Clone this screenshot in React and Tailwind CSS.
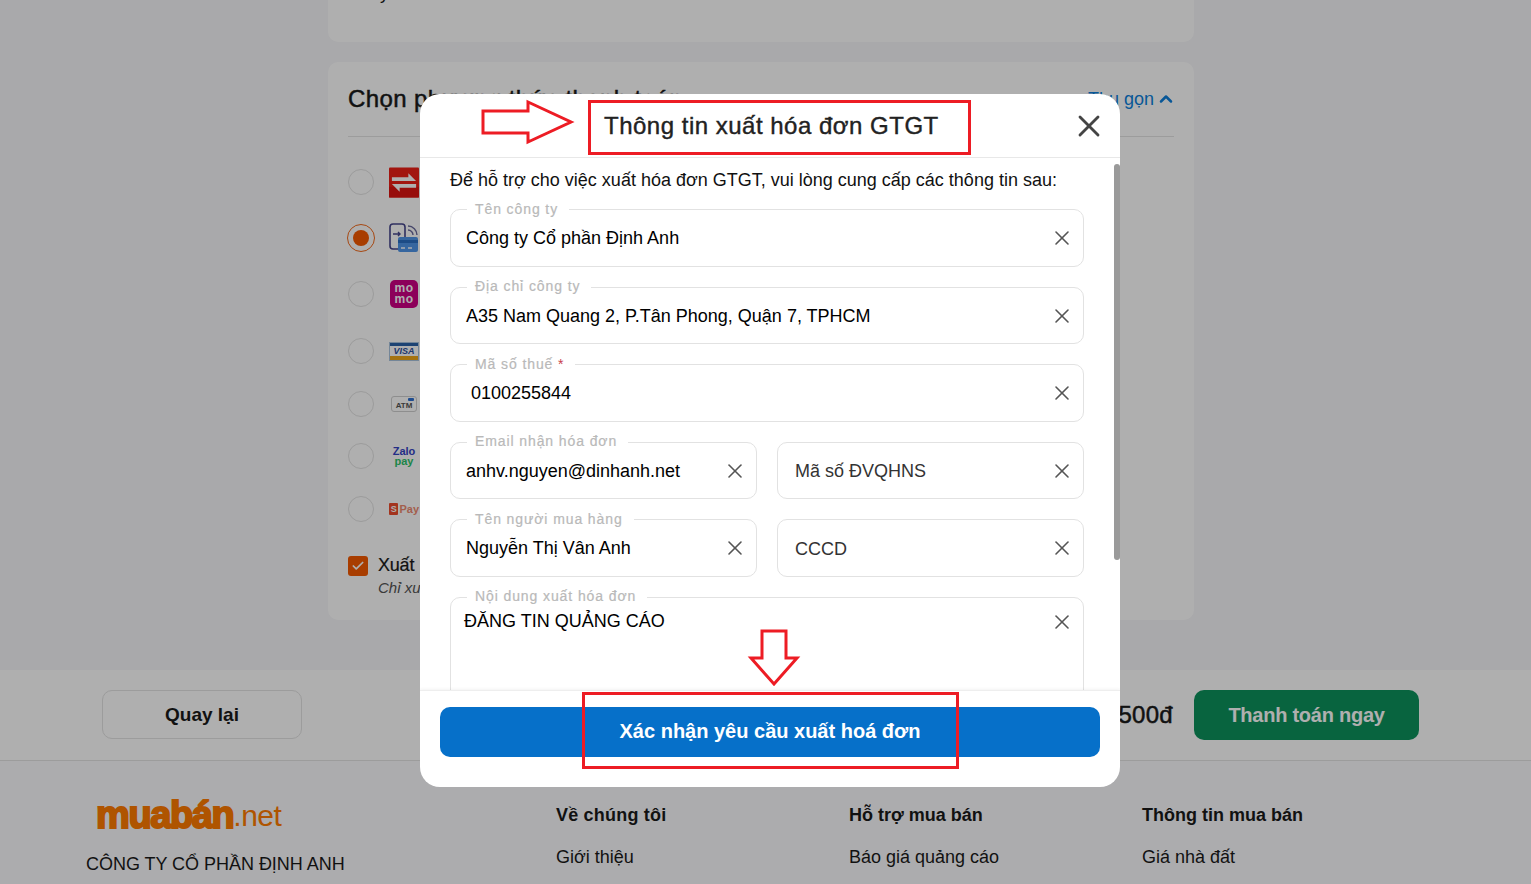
import { X, ChevronUp, Check } from 'lucide-react';

const rowHeights = ['h-[56px]', 'h-[56px]', 'h-[56px]', 'h-[58px]', 'h-[48px]', 'h-[56px]', 'h-[50px]'];

const BankIcon = () => (
  <svg width="31" height="31" viewBox="0 0 31 31">
    <rect width="31" height="31" rx="1" fill="#ec1f17" />
    <rect y="20" width="31" height="11" fill="#dc1410" />
    <path d="M3 14h25l-8-8v4H3z" fill="#fff" />
    <path d="M28 17H3l8 8v-4h17z" fill="#fff" />
  </svg>
);

const CardIcon = () => (
  <svg width="30" height="30" viewBox="0 0 30 30">
    <rect x="1" y="1" width="15" height="25" rx="3" fill="none" stroke="#46468c" strokeWidth="1.6" />
    <path d="M4 11h7m-2-2 2 2-2 2" fill="none" stroke="#46468c" strokeWidth="1.4" />
    <path d="M19 3a9 9 0 0 1 9 9M19 7a5 5 0 0 1 5 5" fill="none" stroke="#6a6a9c" strokeWidth="1.4" />
    <rect x="9" y="14" width="20" height="15" rx="2" fill="#4f95e8" />
    <rect x="9" y="17" width="20" height="3" fill="#2b6fc4" />
    <rect x="12" y="24" width="4" height="2" fill="#cfe2fb" />
    <rect x="19" y="24" width="4" height="2" fill="#cfe2fb" />
  </svg>
);

const MomoIcon = () => (
  <div className="flex h-[28px] w-[28px] flex-col items-center justify-center rounded-[5px] bg-[#cc0083] text-[12px] font-bold leading-[11px] tracking-[0.5px] text-white">
    <span>mo</span>
    <span>mo</span>
  </div>
);

const VisaIcon = () => (
  <div className="flex h-[19px] w-[30px] flex-col border border-[#a9c4de] bg-white">
    <div className="h-[3px] bg-[#2b62a8]" />
    <div className="flex-1 text-center text-[9px] font-bold italic leading-[10px] text-[#2b4f9e]">VISA</div>
    <div className="h-[4px] bg-[#f0a818]" />
  </div>
);

const AtmIcon = () => (
  <div className="relative flex h-[16px] w-[26px] items-center justify-center rounded-[3px] border border-[#cfcfcf] pt-[3px] text-[8px] font-bold text-[#555]">
    ATM
    <div className="absolute right-[2px] top-[1px] h-[3px] w-[6px] rounded-[1px] bg-[#2e6fd0]" />
  </div>
);

const ZaloIcon = () => (
  <div className="flex w-[30px] flex-col items-center text-[11px] font-bold leading-[10px]">
    <span className="text-[#3344c4]">Zalo</span>
    <span className="text-[#2cc26a]">pay</span>
  </div>
);

const ShopeeIcon = () => (
  <div className="flex w-[30px] items-center gap-px">
    <div className="h-[12px] w-[11px] rounded-[1px] bg-[#ee4d2d] text-center text-[9px] font-bold leading-[12px] text-white">S</div>
    <span className="text-[11px] font-bold text-[#ee8a70]">Pay</span>
  </div>
);

const methods = [
  { icon: BankIcon },
  { icon: CardIcon, selected: true },
  { icon: MomoIcon },
  { icon: VisaIcon },
  { icon: AtmIcon },
  { icon: ZaloIcon },
  { icon: ShopeeIcon },
];

const Field = ({ label, required, value, placeholder, pad = 'pl-[15px]', cls = 'h-[58px]', labelTop = 'top-[-10px]', textCls = '', area }) => (
  <div className={`relative flex rounded-[10px] border border-[#e2e2e2] ${cls} ${area ? 'items-start' : 'items-center'}`}>
    {label && (
      <span className={`absolute left-[16px] ${labelTop} bg-white px-[8px] pr-[11px] text-[14px] leading-[18px] tracking-[0.9px] text-[#b9b9b9] whitespace-nowrap [-webkit-text-stroke:0.2px]`}>
        {label}
        {required && <span className="font-normal text-[#c8414b] [-webkit-text-stroke:0px]"> *</span>}
      </span>
    )}
    <span className={`flex-1 truncate text-[18px] ${pad} ${textCls} ${area ? 'mt-[10px]' : ''} ${placeholder ? 'text-[#333]' : 'text-black'}`}>
      {value || placeholder}
    </span>
    <X size={24} strokeWidth={1.6} className={`mr-[9px] shrink-0 text-[#555] ${area ? 'mt-[12px]' : ''}`} />
  </div>
);

const App = () => {
  return (
    <div className="relative flex h-[884px] flex-col overflow-hidden bg-[#f6f6f9] font-['Liberation_Sans',Arial,sans-serif] text-[#1a1a1a]">
      {/* page behind the dialog */}
      <div className="ml-[328px] h-[42px] w-[866px] shrink-0 overflow-hidden rounded-b-[10px] bg-white pl-[52px]">
        <div className="-mt-[18px] text-[18px] leading-[22px]">y</div>
      </div>

      <section className="ml-[328px] mt-[20px] h-[558px] w-[866px] shrink-0 rounded-[10px] bg-white px-5">
        <div className="flex h-[75px] items-center justify-between border-b border-[#e3e3e3]">
          <h2 className="text-[24px] font-medium tracking-[0.4px] [-webkit-text-stroke:0.5px]">Chọn phương thức thanh toán</h2>
          <button className="-mr-[2px] flex items-center gap-[2px] text-[18px] text-[#0d7fdc]">
            Thu gọn
            <ChevronUp size={20} strokeWidth={3} />
          </button>
        </div>
        <div className="mt-[17px]">
          {methods.map((m, i) => {
            const Icon = m.icon;
            return (
              <div key={i} className={`flex items-center gap-[14px] ${rowHeights[i]}`}>
                {m.selected ? (
                  <div className="-ml-px flex h-[28px] w-[28px] items-center justify-center rounded-full border border-[#f26a1b]">
                    <div className="h-[16px] w-[16px] rounded-full bg-[#f55a00]" />
                  </div>
                ) : (
                  <div className="mr-[1px] h-[26px] w-[26px] rounded-full border border-[#e3e3e3]" />
                )}
                <div className="flex w-[30px] justify-center">
                  <Icon />
                </div>
              </div>
            );
          })}
        </div>
        <div className="mt-[18px] flex items-center gap-[10px]">
          <div className="flex h-[20px] w-[20px] items-center justify-center rounded-[3px] bg-[#f55a00] text-white">
            <Check size={14} strokeWidth={3} />
          </div>
          <span className="text-[18px] tracking-[-0.2px] [-webkit-text-stroke:0.2px]">Xuất</span>
        </div>
        <p className="ml-[30px] -mt-[2px] text-[15px] italic text-[#555]">Chỉ xuất</p>
      </section>

      <div className="mt-[50px] flex h-[91px] shrink-0 items-start border-b border-[#e3e3e3] bg-white pl-[102px] pt-[20px]">
        <button className="h-[49px] w-[200px] rounded-[10px] border border-[#e3e3e3] pt-px text-[19px] font-bold">Quay lại</button>
        <div className="ml-auto flex items-center gap-[21px] pr-[112px]">
          <span className="text-[24px] font-medium tracking-[0.3px] [-webkit-text-stroke:0.5px]">12.500đ</span>
          <button className="h-[50px] w-[225px] rounded-[10px] bg-[#0c925d] text-[20px] font-bold tracking-[-0.25px] text-white">Thanh toán ngay</button>
        </div>
      </div>

      <footer className="flex flex-1 bg-[#fbfbfe] pt-[33px]">
        <div className="ml-[86px] w-[470px]">
          <div className="ml-[10px] flex h-[40px] items-end text-[#ff7b00]">
            <span className="text-[38px] font-bold leading-[38px] tracking-[-1.4px] [-webkit-text-stroke:2px]">muabán</span>
            <span className="text-[30px] leading-[36px] tracking-[-0.5px]">.net</span>
          </div>
          <p className="mt-[17px] text-[18px] tracking-[-0.03px]">CÔNG TY CỔ PHẦN ĐỊNH ANH</p>
        </div>
        <div className="mt-[8px] w-[293px] text-[18px]">
          <h3 className="font-bold tracking-[0.2px]">Về chúng tôi</h3>
          <p className="mt-[15px]">Giới thiệu</p>
        </div>
        <div className="mt-[8px] w-[293px] text-[18px]">
          <h3 className="font-bold">Hỗ trợ mua bán</h3>
          <p className="mt-[15px]">Báo giá quảng cáo</p>
        </div>
        <div className="mt-[8px] text-[18px]">
          <h3 className="font-bold">Thông tin mua bán</h3>
          <p className="mt-[15px]">Giá nhà đất</p>
        </div>
      </footer>

      {/* backdrop */}
      <div className="absolute inset-0 bg-[rgba(0,0,0,0.314)]" />

      {/* dialog */}
      <div className="absolute left-[420px] top-[94px] flex h-[693px] w-[700px] flex-col overflow-hidden rounded-[20px] bg-white">
        <div className="flex h-[64px] shrink-0 items-center justify-between border-b border-[#e8e8e8] pl-[184px] pr-[13px]">
          <h1 className="text-[24px] font-medium tracking-[0.5px] text-[#222] [-webkit-text-stroke:0.4px]">Thông tin xuất hóa đơn GTGT</h1>
          <X size={36} strokeWidth={1.9} className="text-[#444]" />
        </div>
        <div className="relative flex-1 overflow-hidden pl-[30px] pr-[36px]">
          <div className="absolute right-0 top-[6px] h-[396px] w-[6px] rounded-[3px] bg-[#9a9a9a]" />
          <p className="mt-[10px] text-[18px] leading-[24px] text-[#111]">Để hỗ trợ cho việc xuất hóa đơn GTGT, vui lòng cung cấp các thông tin sau:</p>
          <div className="mt-[17px] flex flex-col gap-[20px]">
            <Field label="Tên công ty" value="Công ty Cổ phần Định Anh" />
            <Field label="Địa chỉ công ty" value="A35 Nam Quang 2, P.Tân Phong, Quận 7, TPHCM" cls="h-[57px]" labelTop="top-[-11px]" textCls="pt-px" />
            <Field label="Mã số thuế" required value="0100255844" pad="pl-[20px]" />
            <div className="grid grid-cols-2 gap-[20px]">
              <Field label="Email nhận hóa đơn" value="anhv.nguyen@dinhanh.net" cls="h-[57px]" labelTop="top-[-11px]" textCls="pt-px" />
              <Field placeholder="Mã số ĐVQHNS" pad="pl-[17px]" cls="h-[57px]" textCls="pt-px" />
            </div>
            <div className="grid grid-cols-2 gap-[20px]">
              <Field label="Tên người mua hàng" value="Nguyễn Thị Vân Anh" />
              <Field placeholder="CCCD" pad="pl-[17px]" textCls="pt-[2px]" />
            </div>
            <Field label="Nội dung xuất hóa đơn" value="ĐĂNG TIN QUẢNG CÁO" pad="pl-[13px]" cls="h-[120px]" labelTop="top-[-11px]" area />
          </div>
        </div>
        <div className="relative h-[97px] shrink-0 border-t border-[#eee] px-[20px] pt-[16px] shadow-[0_-1px_3px_rgba(0,0,0,0.05)]">
          <button className="h-[50px] w-full rounded-[10px] bg-[#0670c9] pb-[2px] text-[20px] font-bold text-white">Xác nhận yêu cầu xuất hoá đơn</button>
        </div>
      </div>

      {/* red annotations */}
      <svg className="absolute left-0 top-0 pointer-events-none" width="1531" height="884" fill="none" stroke="#ed1c24" strokeWidth="3">
        <path d="M483 111h45V102l43 20-43 20v-9h-45z" />
        <rect x="589.5" y="101.5" width="380" height="52" />
        <path d="M762 631h24v27h11l-23 26-23-26h11z" />
        <rect x="583.5" y="693.5" width="374" height="74" />
      </svg>
    </div>
  );
};

export default App;
